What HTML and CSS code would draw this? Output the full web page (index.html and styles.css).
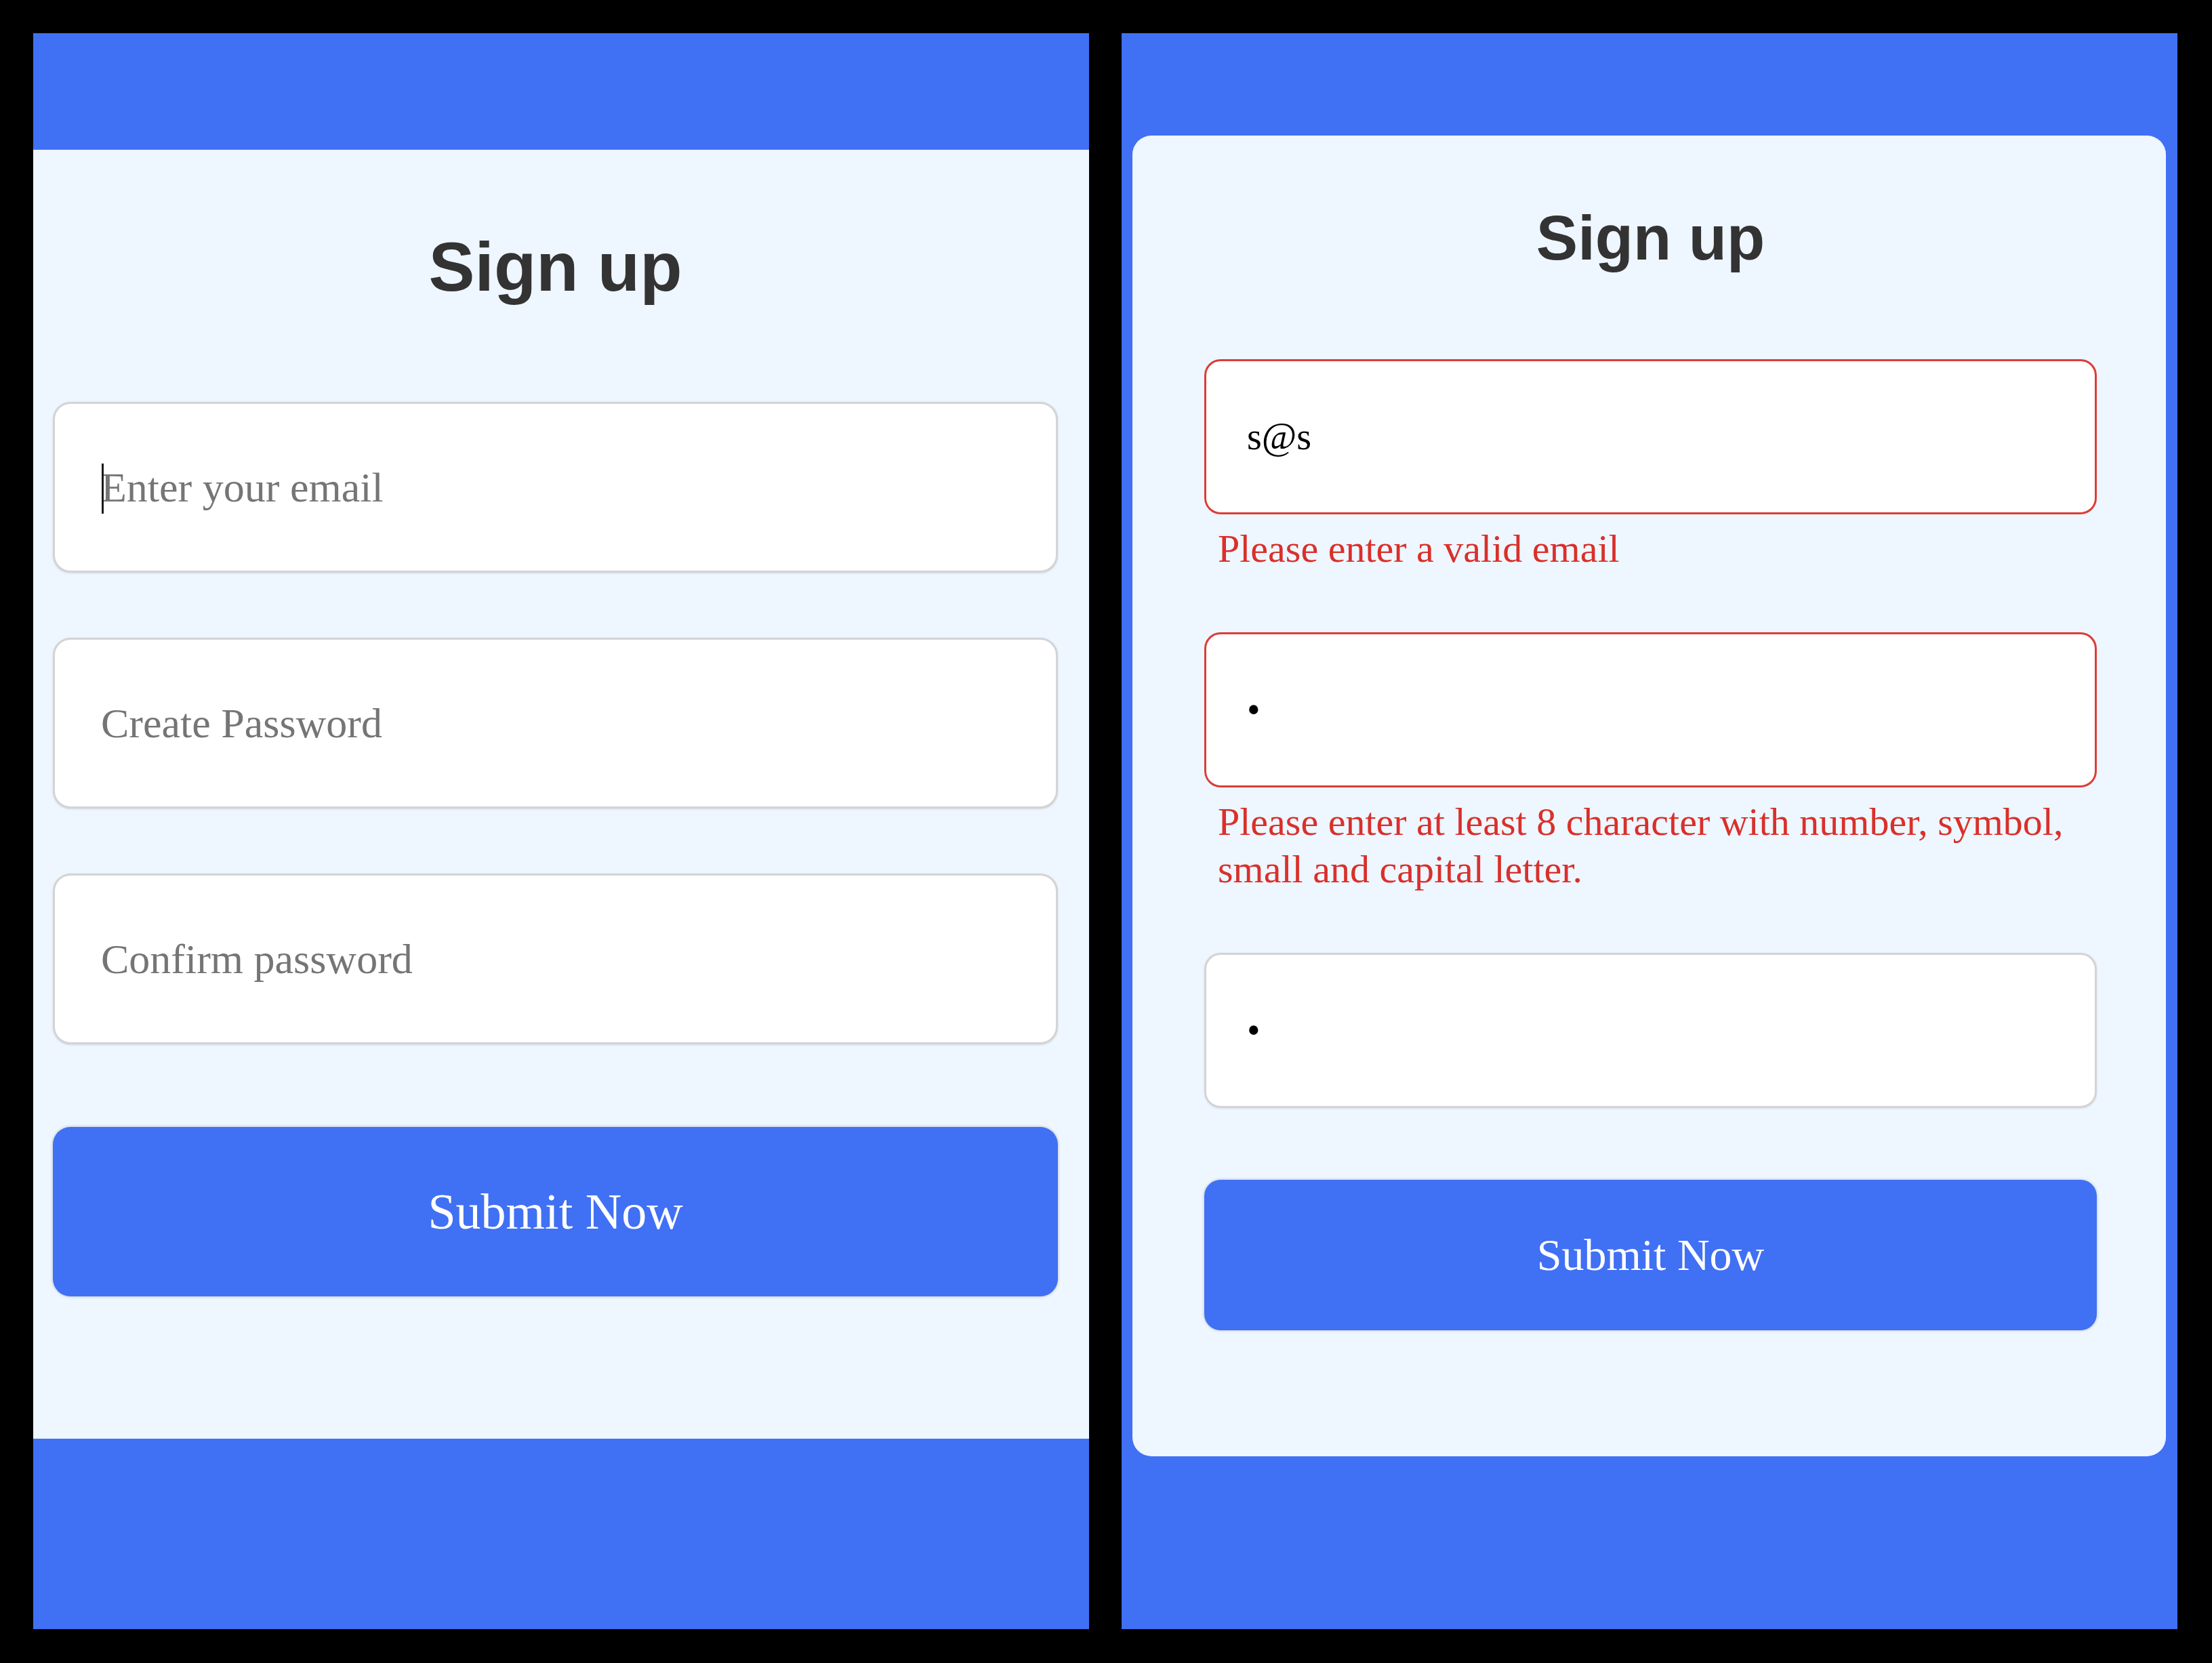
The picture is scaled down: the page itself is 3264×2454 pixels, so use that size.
FILE: index.html
```html
<!DOCTYPE html>
<html lang="en">
<head>
<meta charset="utf-8">
<title>Sign up</title>
<link rel="stylesheet" href="styles.css">
</head>
<body>
<main class="screens">
  <section class="screen screen-a">
    <div class="band band-top"></div>
    <form class="form-a">
      <h1 class="title title-a">Sign up</h1>
      <div class="field-a">
        <input class="input input-a" type="email" placeholder="Enter your email">
        <span class="caret"></span>
      </div>
      <div class="field-a">
        <input class="input input-a" type="password" placeholder="Create Password">
      </div>
      <div class="field-a">
        <input class="input input-a" type="password" placeholder="Confirm password">
      </div>
      <button class="submit submit-a" type="button">Submit Now</button>
    </form>
    <div class="band band-bottom"></div>
  </section>

  <section class="screen screen-b">
    <form class="card">
      <h1 class="title title-b">Sign up</h1>
      <div class="field-b">
        <input class="input input-b is-error" type="text" value="s@s">
        <p class="error">Please enter a valid email</p>
      </div>
      <div class="field-b">
        <input class="input input-b is-error" type="password" value="a">
        <p class="error">Please enter at least 8 character with number, symbol, small and capital letter.</p>
      </div>
      <div class="field-b">
        <input class="input input-b" type="password" value="a">
      </div>
      <button class="submit submit-b" type="button">Submit Now</button>
    </form>
  </section>
</main>
</body>
</html>
```

FILE: styles.css
```css
* {
  box-sizing: border-box;
}

html, body {
  margin: 0;
  padding: 0;
  background: #000;
}

.screens {
  display: flex;
  gap: 48px;
  padding: 49px 50px 50px 49px;
  height: 2454px;
}

.screen {
  width: 1558px;
  height: 2355px;
  background: #4070f4;
  display: flex;
  flex-direction: column;
}

/* ---------- left screen ---------- */
.band-top {
  height: 172px;
  flex: none;
}

.band-bottom {
  flex: 1;
}

.form-a {
  background: #eef6ff;
  padding: 115px 46px 210px 29px;
  display: flex;
  flex-direction: column;
}

.title {
  margin: 0;
  font-family: "Liberation Sans", Arial, sans-serif;
  font-weight: 700;
  color: #333;
  text-align: center;
  line-height: 1.15;
}

.title-a {
  font-size: 102px;
}

.field-a {
  position: relative;
  margin-top: 96px;
}

.title-a + .field-a {
  margin-top: 140px;
}

.input {
  display: block;
  width: 100%;
  background: #fff;
  font-family: "Liberation Serif", "Times New Roman", serif;
  color: #000;
  outline: none;
  margin: 0;
}

.input::placeholder {
  color: #757575;
}

.input-a {
  height: 252px;
  border: 3px solid #d4d4d4;
  border-radius: 26px;
  padding: 0 0 0 68px;
  font-size: 62px;
  box-shadow: 0 1px 3px rgba(0, 0, 0, 0.12);
}

.caret {
  position: absolute;
  left: 72px;
  top: 91px;
  width: 3px;
  height: 74px;
  background: #1a1a1a;
}

.submit {
  display: block;
  width: 100%;
  background: #4070f4;
  color: #fff;
  border: none;
  font-family: "Liberation Serif", "Times New Roman", serif;
  cursor: pointer;
  box-shadow: 0 0 4px rgba(0, 0, 0, 0.25);
}

.submit-a {
  margin-top: 122px;
  height: 250px;
  border-radius: 26px;
  font-size: 74px;
}

/* ---------- right screen ---------- */
.screen-b {
  padding: 151px 17px 0 16px;
}

.card {
  background: #eef6ff;
  border-radius: 28px;
  padding: 99px 102px 186px 106px;
  display: flex;
  flex-direction: column;
}

.title-b {
  font-size: 92px;
}

.field-b {
  margin-top: 88px;
}

.title-b + .field-b {
  margin-top: 125px;
}

.input-b {
  height: 229px;
  border: 3px solid #d4d4d4;
  border-radius: 24px;
  padding: 0 0 0 60px;
  font-size: 56px;
  box-shadow: 0 1px 3px rgba(0, 0, 0, 0.1);
}

.input-b.is-error {
  border-color: #dc3d36;
  box-shadow: none;
}

.error {
  margin: 16px 0 0 20px;
  font-family: "Liberation Serif", "Times New Roman", serif;
  font-size: 58px;
  line-height: 70px;
  color: #d9302b;
}

.submit-b {
  margin-top: 106px;
  height: 222px;
  border-radius: 24px;
  font-size: 66px;
}
```
